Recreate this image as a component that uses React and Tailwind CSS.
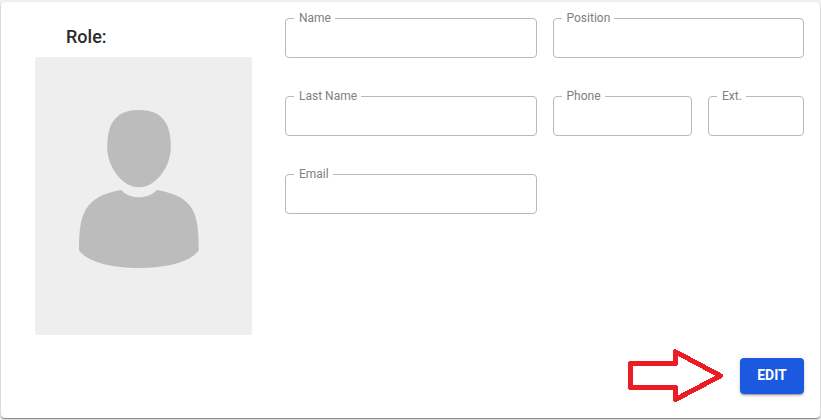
import React from 'react';

// Outlined text field, the label sits on the top border
const OutlinedField = ({ id, label, type = 'text', className = '' }) => (
  <div className={`relative ${className}`}>
    <input
      id={id}
      type={type}
      className="block h-10 w-full rounded border border-[#b9b9b9] bg-transparent px-3.5 text-base text-[#212121] outline-none focus:border-[#1a59e0]"
    />
    <label
      htmlFor={id}
      className="absolute left-[9px] -top-2 bg-white pr-1 pl-[5px] text-xs text-[#808080]"
    >
      {label}
    </label>
  </div>
);

// Placeholder shown while there is no photo
const AvatarPlaceholder = () => (
  <svg
    className="block w-full rounded-xs bg-[#eeeeee]"
    viewBox="0 0 217 278"
    fill="#bcbcbc"
    role="img"
    aria-label="No photo"
  >
    <path d="M104 53C126 53 135.8 65 135.8 90C135.8 111 120 130.3 104 130.3C88 130.3 72.2 111 72.2 90C72.2 65 82 53 104 53Z" />
    <path d="M86.3 133C90.5 138 97 140.3 104 140.3C111 140.3 117.5 138 121.7 133C160 139.5 163.8 157 163.8 193.5C155 205 132 211 104 211C76 211 53 205 44 193.5C44 157 49 139.5 86.3 133Z" />
  </svg>
);

const ArrowHint = () => (
  <svg
    className="h-[54px] w-24"
    viewBox="0 0 96 54"
    fill="none"
    stroke="#ed1c24"
    strokeWidth={5}
    strokeLinejoin="round"
    shapeRendering="crispEdges"
    aria-hidden="true"
  >
    <path d="M2.5 14.5H47.5V2.8L92.5 26.8L47.5 50.5V38.5H2.5Z" />
  </svg>
);

const App = () => {
  return (
    <main className="bg-[#f1f1f1] px-px py-0.5 font-[Roboto,sans-serif]">
      <form
        className="rounded bg-white pt-4 pr-4 pb-[15px] pl-[34px] shadow-[0_1px_1px_rgba(0,0,0,0.4),0_1px_3px_rgba(0,0,0,0.15)]"
        onSubmit={e => e.preventDefault()}
      >
        <div className="flex items-start gap-[33px]">
          {/* Role and photo */}
          <div className="w-[217px] shrink-0">
            <h2 className="pt-[5px] pb-1.5 pl-[31px] text-lg leading-7 font-medium text-[#2b2b2b]">
              Role:
            </h2>
            <AvatarPlaceholder />
          </div>

          {/* Contact data */}
          <div className="grid flex-1 grid-cols-2 gap-x-4 gap-y-[38px]">
            <OutlinedField id="name" label="Name" />
            <OutlinedField id="position" label="Position" />
            <OutlinedField id="lastName" label="Last Name" />
            <div className="flex gap-4">
              <OutlinedField
                id="phone"
                label="Phone"
                type="tel"
                className="min-w-0 flex-1"
              />
              <OutlinedField id="ext" label="Ext." className="w-24" />
            </div>
            <OutlinedField id="email" label="Email" type="email" />
          </div>
        </div>

        {/* Actions */}
        <div className="mt-3.5 flex items-center justify-end gap-4">
          <ArrowHint />
          <button
            type="button"
            className="h-9 w-16 rounded bg-[#1a59e0] pb-0.5 text-sm font-bold text-white shadow-[0_3px_1px_-2px_rgba(0,0,0,0.2),0_2px_2px_0_rgba(0,0,0,0.14),0_1px_5px_0_rgba(0,0,0,0.12)]"
          >
            EDIT
          </button>
        </div>
      </form>
    </main>
  );
};

export default App;
